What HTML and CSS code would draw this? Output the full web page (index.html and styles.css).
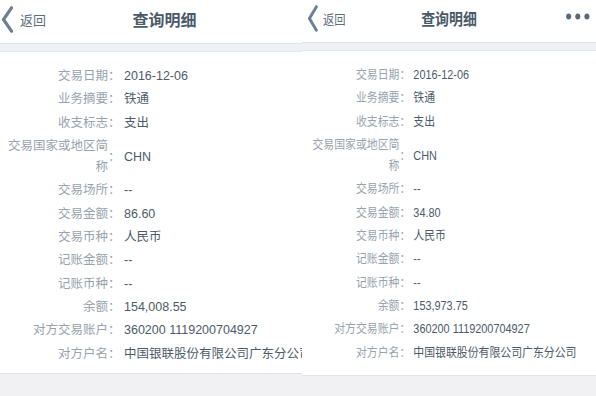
FILE: index.html
```html
<!DOCTYPE html>
<html lang="zh-CN">
<head>
  <meta charset="UTF-8">
  <meta name="viewport" content="width=device-width, initial-scale=1.0">
  <title>查询明细</title>
  <link rel="stylesheet" href="styles.css">
</head>
<body>

  <div class="pair">

    <!-- First screenshot -->
    <section class="phone phone-a">
      <div class="screen">
        <header class="nav">
          <a class="nav-back">
            <svg class="chevron" width="14" height="27" viewBox="0 0 14 27"><path d="M11.5 1.8 L3.5 13.5 L11.5 25.2"/></svg>
            返回
          </a>
          <h1 class="nav-title">查询明细</h1>
          <span></span>
        </header>
        <div class="gap"></div>

        <div class="detail">
          <div class="row"><span class="label">交易日期</span><span class="colon">：</span><span class="value">2016-12-06</span></div>
          <div class="row"><span class="label">业务摘要</span><span class="colon">：</span><span class="value">铁通</span></div>
          <div class="row"><span class="label">收支标志</span><span class="colon">：</span><span class="value">支出</span></div>
          <div class="row"><span class="label">交易国家或地区简称</span><span class="colon">：</span><span class="value">CHN</span></div>
          <div class="row"><span class="label">交易场所</span><span class="colon">：</span><span class="value">--</span></div>
          <div class="row"><span class="label">交易金额</span><span class="colon">：</span><span class="value">86.60</span></div>
          <div class="row"><span class="label">交易币种</span><span class="colon">：</span><span class="value">人民币</span></div>
          <div class="row"><span class="label">记账金额</span><span class="colon">：</span><span class="value">--</span></div>
          <div class="row"><span class="label">记账币种</span><span class="colon">：</span><span class="value">--</span></div>
          <div class="row"><span class="label">余额</span><span class="colon">：</span><span class="value">154,008.55</span></div>
          <div class="row"><span class="label">对方交易账户</span><span class="colon">：</span><span class="value">360200 1119200704927</span></div>
          <div class="row"><span class="label">对方户名</span><span class="colon">：</span><span class="value">中国银联股份有限公司广东分公司</span></div>
        </div>

        <div class="foot"></div>
      </div>
    </section>

    <!-- Second screenshot (narrower capture) -->
    <section class="phone phone-b">
      <div class="screen">
        <header class="nav">
          <a class="nav-back">
            <svg class="chevron" width="14" height="27" viewBox="0 0 14 27"><path d="M11.5 1.8 L3.5 13.5 L11.5 25.2"/></svg>
            返回
          </a>
          <h1 class="nav-title">查询明细</h1>
          <svg class="nav-more" width="28" height="7" viewBox="0 0 28 7"><circle cx="3.5" cy="3.5" r="2.9"/><circle cx="14" cy="3.5" r="2.9"/><circle cx="24.5" cy="3.5" r="2.9"/></svg>
        </header>
        <div class="gap"></div>

        <div class="detail">
          <div class="row"><span class="label">交易日期</span><span class="colon">：</span><span class="value">2016-12-06</span></div>
          <div class="row"><span class="label">业务摘要</span><span class="colon">：</span><span class="value">铁通</span></div>
          <div class="row"><span class="label">收支标志</span><span class="colon">：</span><span class="value">支出</span></div>
          <div class="row"><span class="label">交易国家或地区简称</span><span class="colon">：</span><span class="value">CHN</span></div>
          <div class="row"><span class="label">交易场所</span><span class="colon">：</span><span class="value">--</span></div>
          <div class="row"><span class="label">交易金额</span><span class="colon">：</span><span class="value">34.80</span></div>
          <div class="row"><span class="label">交易币种</span><span class="colon">：</span><span class="value">人民币</span></div>
          <div class="row"><span class="label">记账金额</span><span class="colon">：</span><span class="value">--</span></div>
          <div class="row"><span class="label">记账币种</span><span class="colon">：</span><span class="value">--</span></div>
          <div class="row"><span class="label">余额</span><span class="colon">：</span><span class="value">153,973.75</span></div>
          <div class="row"><span class="label">对方交易账户</span><span class="colon">：</span><span class="value">360200 1119200704927</span></div>
          <div class="row"><span class="label">对方户名</span><span class="colon">：</span><span class="value">中国银联股份有限公司广东分公司</span></div>
        </div>

        <div class="foot"></div>
      </div>
    </section>

  </div>

</body>
</html>
```

FILE: styles.css
```css
body {
  margin: 0;
  padding: 0;
  font-family: "Liberation Sans", "Noto Sans CJK SC", sans-serif;
  background-color: #f1f1f3;
}

.pair {
  display: flex;
  height: 396px;
}

.phone {
  height: 396px;
  overflow: hidden;
  flex: none;
}

.phone-a {
  width: 302px;
}

.phone-b {
  width: 294px;
}

.screen {
  height: 396px;
  display: flex;
  flex-direction: column;
  background: white;
}

.phone-a .screen {
  width: 329px;
}

/* second capture is squeezed horizontally */
.phone-b .screen {
  width: 338px;
  transform: scaleX(0.87);
  transform-origin: 0 0;
}

/* Navigation bar */
.nav {
  display: grid;
  grid-template-columns: 1fr auto 1fr;
  align-items: center;
  height: 44px;
  padding-bottom: 5px;
  box-sizing: border-box;
  border-bottom: 1px solid #dde3e8;
  background: white;
}

.phone-b .nav {
  height: 43px;
  padding-bottom: 6px;
}

.nav-back {
  display: flex;
  align-items: center;
  gap: 6px;
  font-size: 13px;
  color: #5d6d7b;
}

.phone-b .nav-back {
  padding-left: 5px;
  gap: 5px;
}

.chevron path {
  fill: none;
  stroke: #6d7f90;
  stroke-width: 3.2;
  stroke-linecap: round;
  stroke-linejoin: round;
}

.nav-title {
  margin: 0;
  font-size: 16px;
  font-weight: bold;
  color: #4b5a68;
}

.nav-more {
  justify-self: end;
  margin-right: 7px;
  margin-top: -4px;
  fill: #5a6a79;
}

.gap {
  height: 7px;
  background: #eff2f4;
  border-bottom: 1px solid #e3e7ea;
}

/* Detail list */
.detail {
  height: 321px;
  box-sizing: border-box;
  flex: none;
  padding: 13px 0 0 7px;
  font-size: 12.5px;
}

.phone-b .detail {
  height: 324px;
  padding-left: 11px;
}

.row {
  display: flex;
  align-items: center;
  padding: 1px 0;
  line-height: 21.3px;
}

.label {
  width: 101px;
  flex: none;
  text-align: right;
  color: #97a3ad;
}

.colon {
  width: 12px;
  flex: none;
  color: #97a3ad;
}

.value {
  padding-left: 4px;
  white-space: nowrap;
  color: #4d5b69;
}

.foot {
  flex: 1;
  background: #f1f1f3;
  border-top: 1px solid #e2e4e7;
}
```
